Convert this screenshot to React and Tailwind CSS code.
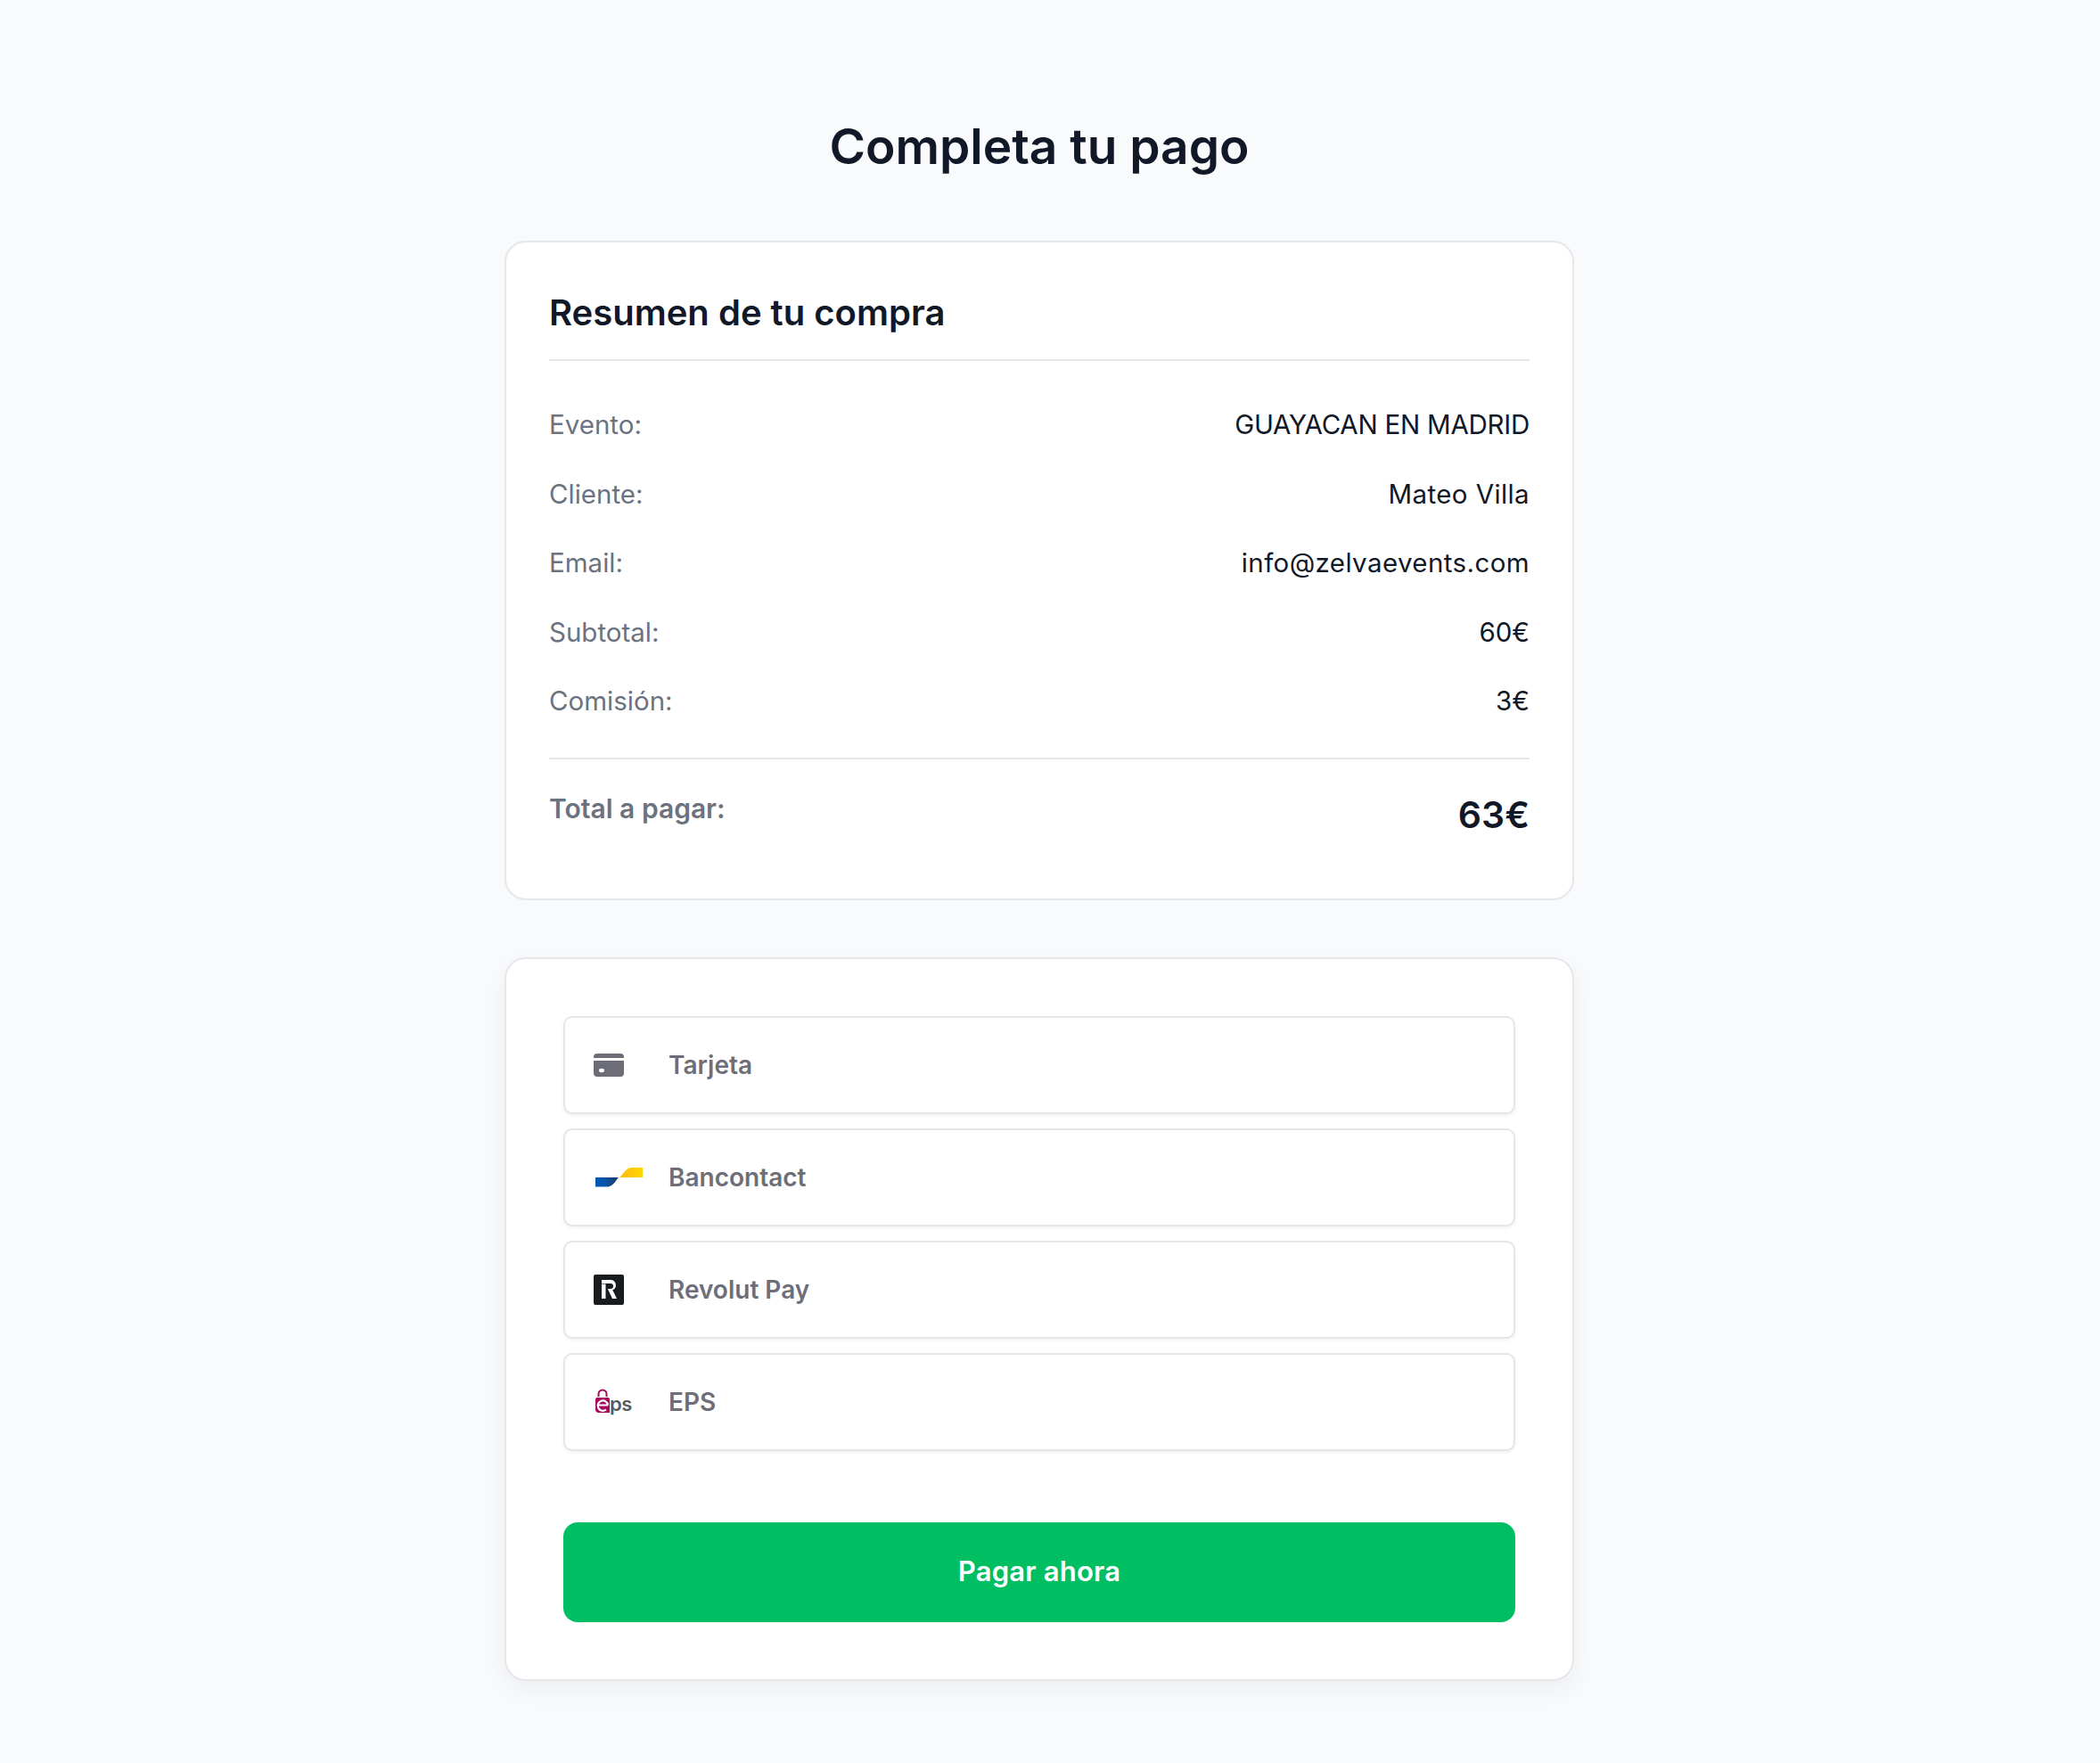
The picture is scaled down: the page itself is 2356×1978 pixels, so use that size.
const SUMMARY_ROWS = [
  { label: "Evento:", value: "GUAYACAN EN MADRID", tracking: "tracking-[-0.25px]" },
  { label: "Cliente:", value: "Mateo Villa", tracking: "tracking-[0.4px]" },
  { label: "Email:", value: "info@zelvaevents.com", tracking: "tracking-[0.4px]" },
  { label: "Subtotal:", value: "60€", tracking: "" },
  { label: "Comisión:", value: "3€", tracking: "" },
];

function CardIcon() {
  return (
    <svg width="34" height="26" viewBox="0 0 34 26" fill="#6d6d78">
      <path d="M0 5V4a4 4 0 0 1 4-4h26a4 4 0 0 1 4 4v1z" />
      <path d="M0 8h34v14a4 4 0 0 1-4 4H4a4 4 0 0 1-4-4z" />
      <ellipse cx="9" cy="19" rx="3" ry="2.2" fill="#fff" />
    </svg>
  );
}

function BancontactIcon() {
  return (
    <svg width="54" height="22" viewBox="0 0 54 22" className="ml-[2px]">
      <defs>
        <linearGradient id="bc-blue" x1="0" x2="1" y1="0" y2="0">
          <stop offset="0" stopColor="#0058b5" />
          <stop offset="0.4" stopColor="#0b55a8" />
          <stop offset="1" stopColor="#1e3764" />
        </linearGradient>
        <linearGradient id="bc-yellow" x1="0" x2="1" y1="0" y2="0">
          <stop offset="0" stopColor="#fdb913" />
          <stop offset="1" stopColor="#ffd800" />
        </linearGradient>
      </defs>
      <path d="M0 11h26c-3 3-6 10-12 10.500H0z" fill="url(#bc-blue)" />
      <path d="M27 11c4-3 7-11 14-11h12v11z" fill="url(#bc-yellow)" />
    </svg>
  );
}

function RevolutIcon() {
  return (
    <svg width="34" height="34" viewBox="0 0 34 34">
      <rect width="34" height="34" rx="2" fill="#191c1f" />
      <path d="M9 10.600h4.500V27H9z" fill="#fff" />
      <path d="M9 6h10a5.800 5.800 0 0 1 2.200 11.200L26 27h-5l-5-10.400v-.6h3a2.500 2.500 0 0 0 0-6H9z" fill="#fff" />
    </svg>
  );
}

function EpsIcon() {
  return (
    <svg width="44" height="30" viewBox="0 0 44 30" className="ml-px">
      <path d="M4.500 9V6a4.500 4.500 0 0 1 9 0v3" fill="none" stroke="#a6085f" strokeWidth="2" />
      <path d="M1 12a2 2 0 0 1 2-2h12a2 2 0 0 1 2 2v15H5a4 4 0 0 1-4-4z" fill="#a6085f" />
      <path d="M3.500 18.500h11.500M15 18.500a5.700 5.700 0 1 0-2 5" fill="none" stroke="#fff" strokeWidth="2.200" />
      <text x="17" y="25" fontFamily="Inter, sans-serif" fontWeight="600" fontSize="22" fill="#555b5e" letterSpacing="-0.5">ps</text>
    </svg>
  );
}

const METHODS = [
  { label: "Tarjeta", icon: <CardIcon /> },
  { label: "Bancontact", icon: <BancontactIcon /> },
  { label: "Revolut Pay", icon: <RevolutIcon /> },
  { label: "EPS", icon: <EpsIcon /> },
];

export default function App() {
  return (
    <div className="min-h-[1978px] bg-[#f9fafb] pt-[128px] pr-[24px] font-['Inter',sans-serif] text-[#111827]">
      <h1 className="mb-[70px] text-center text-[55px] leading-[72px] font-semibold">Completa tu pago</h1>

      <div className="mx-auto w-[1200px]">
        <section className="rounded-[24px] border-2 border-[#e5e7eb] bg-white px-[48px] pt-[51px] pb-[64px]">
          <h2 className="border-b-2 border-[#e5e7eb] pb-[24px] text-[40px] leading-[56px] font-semibold">Resumen de tu compra</h2>

          <div className="mt-[48px] flex flex-col gap-[31.5px] border-b-2 border-[#e5e7eb] pb-[40.5px]">
            {SUMMARY_ROWS.map((row) => (
              <div key={row.label} className="flex justify-between text-[29.5px] leading-[46px]">
                <span className="text-[#6b7280]">{row.label}</span>
                <span className={row.tracking}>{row.value}</span>
              </div>
            ))}
          </div>

          <div className="mt-[32px] flex items-start justify-between">
            <span className="text-[30px] leading-[46px] font-semibold text-[#6b7280]">Total a pagar:</span>
            <span className="text-[41px] leading-[60px] font-semibold">63€</span>
          </div>
        </section>

        <section className="mt-[64px] rounded-[24px] border-2 border-[#e5e7eb] bg-white px-[64px] pt-[64px] pb-[64px] shadow-[0_10px_30px_rgba(0,0,0,0.05)]">
          <div className="flex flex-col gap-[16px]">
            {METHODS.map((method) => (
              <div key={method.label} className="flex h-[110px] items-center rounded-[10px] border-2 border-[#e6e6e6] bg-white shadow-[0_2px_4px_rgba(0,0,0,0.05)]">
                <div className="ml-[32px] flex w-[84px] items-center">{method.icon}</div>
                <span className="text-[28px] font-semibold text-[#6d6e78]">{method.label}</span>
              </div>
            ))}
          </div>

          <button className="mt-[80px] h-[112px] w-full rounded-[16px] bg-[#00bf63] text-[31px] font-semibold tracking-[0.2px] text-white">Pagar ahora</button>
        </section>
      </div>
    </div>
  );
}
